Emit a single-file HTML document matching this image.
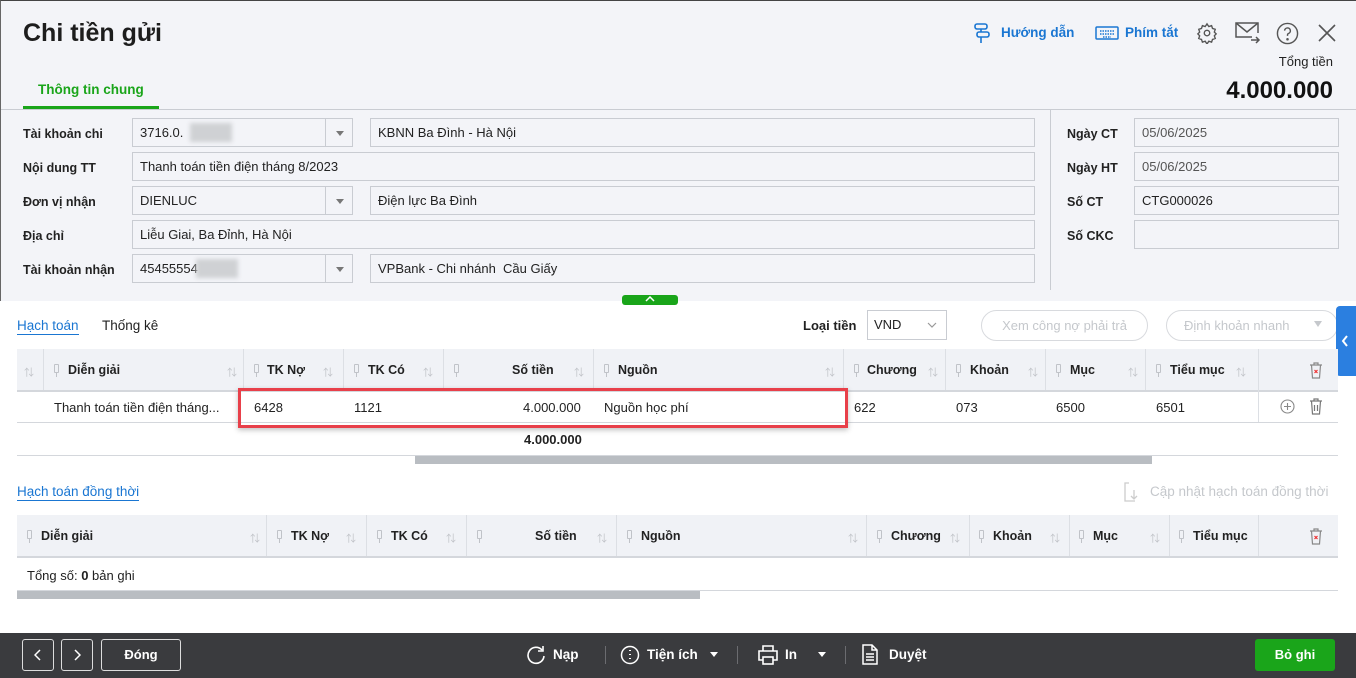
<!DOCTYPE html>
<html><head><meta charset="utf-8"><style>
*{box-sizing:border-box;margin:0;padding:0}
body{width:1356px;height:678px;overflow:hidden;font-family:"Liberation Sans","Noto Sans CJK SC",sans-serif;font-size:13px;color:#222;background:#fff;position:relative}
.a{position:absolute}
.top{left:0;top:0;width:1356px;height:301px;background:#f3f4f8;border-left:1px solid #666;border-top:1px solid #444}
.lbl{position:absolute;font-weight:bold;font-size:12.5px;color:#222}
.in{position:absolute;height:29px;border:1px solid #c9ccd2;background:#f3f4f8;padding:0 7px;line-height:28px;font-size:13px;color:#222}
.dd{position:absolute;width:28px;height:29px;border:1px solid #c9ccd2;border-left:1px solid #c9ccd2;background:#f3f4f8}
.dd:after{content:"";position:absolute;left:10px;top:12px;border-left:4px solid transparent;border-right:4px solid transparent;border-top:5px solid #777}
.blur{position:absolute;background:#cfd1d4;filter:blur(2px)}
.th{position:absolute;background:#f0f2f6;border-bottom:2px solid #d4d7dc}
.th div{position:absolute;top:0;height:100%;border-right:1px solid #dcdfe4;font-weight:bold;font-size:12.5px;line-height:42px}
.hd{position:absolute;font-weight:bold;font-size:12.5px}
.srt{position:absolute;color:#c0c3c8;font-size:10px}
.pin{position:absolute;width:5px;height:9px;border:1px solid #c0c3c8;border-radius:1px}
.pin:after{content:"";position:absolute;left:1px;top:8px;width:1px;height:4px;background:#c0c3c8}
.cell{position:absolute;font-size:13px}
.fb{position:absolute;top:639px;height:32px;border:1px solid #ddd;border-radius:3px;color:#fff;font-weight:bold;text-align:center;line-height:30px}
.ft{position:absolute;color:#fff;font-weight:bold;font-size:13.5px;top:647px}
.sep{position:absolute;top:646px;width:1px;height:18px;background:#6b6c70}
</style></head><body>
<div class="a top"></div>
<div class="a" style="left:23px;top:19px;font-size:25px;font-weight:bold;color:#1d1d1d">Chi tiền gửi</div>
<svg class="a" style="left:972px;top:22px" width="20" height="22" viewBox="0 0 20 22" fill="none" stroke="#1a76d2" stroke-width="1.6"><rect x="3" y="2" width="12" height="5" rx="2"/><rect x="5" y="10" width="12" height="5" rx="2"/><path d="M9 7v3M9 15v6"/></svg>
<div class="a" style="left:1001px;top:25px;color:#1a76d2;font-weight:bold;font-size:13.5px">Hướng dẫn</div>
<svg class="a" style="left:1095px;top:26px" width="24" height="14" viewBox="0 0 24 14" fill="none" stroke="#1a76d2" stroke-width="1.5"><rect x="1" y="1" width="22" height="12" rx="1"/><path d="M5 5h14M5 8h14M8 11h8" stroke-dasharray="1.5 1"/></svg>
<div class="a" style="left:1125px;top:25px;color:#1a76d2;font-weight:bold;font-size:13.5px">Phím tắt</div>
<svg class="a" style="left:1196px;top:22px" width="22" height="22" viewBox="0 0 24 24" fill="none" stroke="#555" stroke-width="1.5"><circle cx="12" cy="12" r="3"/><path d="M12 2l2 3 3-1 1 3 3 1-1 3 2 2-2 2 1 3-3 1-1 3-3-1-2 3-2-3-3 1-1-3-3-1 1-3-2-2 2-2-1-3 3-1 1-3 3 1z"/></svg>
<svg class="a" style="left:1235px;top:22px" width="26" height="22" viewBox="0 0 26 22" fill="none" stroke="#555" stroke-width="1.5"><path d="M17 15H1V1h22v10"/><path d="M1 1l11 9 11-9"/><path d="M16 18h8M21 15l3 3-3 3"/></svg>
<svg class="a" style="left:1276px;top:22px" width="23" height="23" viewBox="0 0 24 24" fill="none" stroke="#555" stroke-width="1.5"><circle cx="12" cy="12" r="10.5"/><path d="M9 9a3 3 0 1 1 4 3c-1 .5-1 1-1 2.5"/><circle cx="12" cy="18" r=".6" fill="#555"/></svg>
<svg class="a" style="left:1318px;top:24px" width="18" height="18" viewBox="0 0 18 18" stroke="#555" stroke-width="1.6"><path d="M1 1l16 16M17 1L1 17"/></svg>
<div class="a" style="right:23px;top:54px;font-size:13px;color:#222">Tổng tiền</div>
<div class="a" style="right:23px;top:77px;font-size:24px;font-weight:bold;color:#111">4.000.000</div>
<div class="a" style="left:38px;top:82px;color:#1aa51a;font-weight:bold;font-size:13.5px">Thông tin chung</div>
<div class="a" style="left:23px;top:106px;width:136px;height:3px;background:#1aa51a"></div>
<div class="a" style="left:1px;top:109px;width:1355px;height:1px;background:#c9ccd2"></div>
<div class="a" style="left:1050px;top:110px;width:1px;height:180px;background:#c9ccd2"></div>
<div class="lbl" style="left:23px;top:127px">Tài khoản chi</div>
<div class="lbl" style="left:23px;top:161px">Nội dung TT</div>
<div class="lbl" style="left:23px;top:195px">Đơn vị nhận</div>
<div class="lbl" style="left:23px;top:229px">Địa chỉ</div>
<div class="lbl" style="left:23px;top:263px">Tài khoản nhận</div>
<div class="in" style="left:132px;top:118px;width:194px">3716.0.</div><div class="blur" style="left:190px;top:123px;width:42px;height:19px"></div><div class="dd" style="left:325px;top:118px"></div>
<div class="in" style="left:370px;top:118px;width:665px">KBNN Ba Đình - Hà Nội</div>
<div class="in" style="left:132px;top:152px;width:903px">Thanh toán tiền điện tháng 8/2023</div>
<div class="in" style="left:132px;top:186px;width:194px">DIENLUC</div><div class="dd" style="left:325px;top:186px"></div>
<div class="in" style="left:370px;top:186px;width:665px">Điện lực Ba Đình</div>
<div class="in" style="left:132px;top:220px;width:903px">Liễu Giai, Ba Đỉnh, Hà Nội</div>
<div class="in" style="left:132px;top:254px;width:194px">45455554</div><div class="blur" style="left:196px;top:259px;width:42px;height:19px"></div><div class="dd" style="left:325px;top:254px"></div>
<div class="in" style="left:370px;top:254px;width:665px">VPBank - Chi nhánh&nbsp; Cầu Giấy</div>
<div class="lbl" style="left:1067px;top:127px">Ngày CT</div>
<div class="lbl" style="left:1067px;top:161px">Ngày HT</div>
<div class="lbl" style="left:1067px;top:195px">Số CT</div>
<div class="lbl" style="left:1067px;top:229px">Số CKC</div>
<div class="in" style="left:1134px;top:118px;width:205px;color:#555">05/06/2025</div>
<div class="in" style="left:1134px;top:152px;width:205px;color:#555">05/06/2025</div>
<div class="in" style="left:1134px;top:186px;width:205px">CTG000026</div>
<div class="in" style="left:1134px;top:220px;width:205px"></div>
<div class="a" style="left:622px;top:295px;width:56px;height:10px;background:#1aa51a;border-radius:3px"></div>
<svg class="a" style="left:645px;top:296px" width="10" height="6" viewBox="0 0 10 6" fill="none" stroke="#fff" stroke-width="1.5"><path d="M1 5l4-4 4 4"/></svg>
<div class="a" style="left:17px;top:318px;color:#1a76d2;font-size:13.5px;border-bottom:1px solid #1a76d2;padding-bottom:1px">Hạch toán</div>
<div class="a" style="left:102px;top:318px;font-size:13.5px">Thống kê</div>
<div class="a" style="left:803px;top:318px;font-weight:bold;font-size:13px">Loại tiền</div>
<div class="a" style="left:867px;top:310px;width:80px;height:30px;border:1px solid #c9ccd2;padding-left:6px;line-height:28px">VND</div>
<svg class="a" style="left:927px;top:322px" width="10" height="6" viewBox="0 0 10 6" fill="none" stroke="#999" stroke-width="1.2"><path d="M1 1l4 4 4-4"/></svg>
<div class="a" style="left:981px;top:310px;width:167px;height:31px;border:1px solid #d8dade;border-radius:16px;color:#c5c8cc;text-align:center;line-height:29px">Xem công nợ phải trả</div>
<div class="a" style="left:1166px;top:310px;width:172px;height:31px;border:1px solid #d8dade;border-radius:16px;color:#c5c8cc;line-height:29px;padding-left:17px">Định khoản nhanh</div>
<div class="a" style="left:1314px;top:321px;border-left:4px solid transparent;border-right:4px solid transparent;border-top:6px solid #c5c8cc"></div>
<div class="a" style="left:1336px;top:306px;width:20px;height:70px;background:#2b7fe0;border-radius:4px 0 0 4px"></div>
<svg class="a" style="left:1341px;top:335px" width="8" height="12" viewBox="0 0 8 12" fill="none" stroke="#fff" stroke-width="2"><path d="M6 1L2 6l4 5"/></svg>
<div class="th" style="left:17px;top:349px;width:1321px;height:43px">
<div style="left:0;width:27px"></div><div style="left:26px;width:201px"></div><div style="left:226px;width:101px"></div><div style="left:326px;width:101px"></div><div style="left:426px;width:151px"></div><div style="left:576px;width:251px"></div><div style="left:826px;width:103px"></div><div style="left:928px;width:101px"></div><div style="left:1028px;width:101px"></div><div style="left:1128px;width:114px"></div>
</div>
<div class="a" style="left:1258px;top:349px;width:1px;height:74px;background:#dcdfe4"></div>
<div class="hd" style="left:68px;top:363px">Diễn giải</div>
<div class="hd" style="left:267px;top:363px">TK Nợ</div>
<div class="hd" style="left:368px;top:363px">TK Có</div>
<div class="hd" style="left:512px;top:363px">Số tiền</div>
<div class="hd" style="left:618px;top:363px">Nguồn</div>
<div class="hd" style="left:867px;top:363px">Chương</div>
<div class="hd" style="left:970px;top:363px">Khoản</div>
<div class="hd" style="left:1070px;top:363px">Mục</div>
<div class="hd" style="left:1170px;top:363px">Tiểu mục</div>
<div class="srt" style="left:24px;top:364px">⇅</div><div class="srt" style="left:227px;top:364px">⇅</div><div class="srt" style="left:323px;top:364px">⇅</div><div class="srt" style="left:423px;top:364px">⇅</div><div class="srt" style="left:574px;top:364px">⇅</div><div class="srt" style="left:825px;top:364px">⇅</div><div class="srt" style="left:928px;top:364px">⇅</div><div class="srt" style="left:1028px;top:364px">⇅</div><div class="srt" style="left:1128px;top:364px">⇅</div><div class="srt" style="left:1236px;top:364px">⇅</div>
<div class="pin" style="left:54px;top:364px"></div><div class="pin" style="left:254px;top:364px"></div><div class="pin" style="left:354px;top:364px"></div><div class="pin" style="left:454px;top:364px"></div><div class="pin" style="left:604px;top:364px"></div><div class="pin" style="left:854px;top:364px"></div><div class="pin" style="left:956px;top:364px"></div><div class="pin" style="left:1056px;top:364px"></div><div class="pin" style="left:1156px;top:364px"></div>
<svg class="a" style="left:1309px;top:362px" width="14" height="17" viewBox="0 0 14 17" fill="none" stroke="#888" stroke-width="1.2"><path d="M1 3h12M5 3V1h4v2M2.5 3l1 13h7l1-13"/><path d="M5.5 8l3 3M8.5 8l-3 3" stroke="#e33"/></svg>
<div class="a" style="left:17px;top:422px;width:1321px;height:1px;background:#d4d7dc"></div>
<div class="cell" style="left:54px;top:400px">Thanh toán tiền điện tháng...</div>
<div class="cell" style="left:254px;top:400px">6428</div>
<div class="cell" style="left:354px;top:400px">1121</div>
<div class="cell" style="left:523px;top:400px">4.000.000</div>
<div class="cell" style="left:604px;top:400px">Nguồn học phí</div>
<div class="cell" style="left:854px;top:400px">622</div>
<div class="cell" style="left:956px;top:400px">073</div>
<div class="cell" style="left:1056px;top:400px">6500</div>
<div class="cell" style="left:1156px;top:400px">6501</div>
<svg class="a" style="left:1280px;top:399px" width="15" height="15" viewBox="0 0 15 15" fill="none" stroke="#888" stroke-width="1.1"><circle cx="7.5" cy="7.5" r="6.5"/><path d="M7.5 4v7M4 7.5h7"/></svg>
<svg class="a" style="left:1309px;top:398px" width="14" height="17" viewBox="0 0 14 17" fill="none" stroke="#777" stroke-width="1.2"><path d="M1 3h12M5 3V1h4v2M2.5 3l1 13h7l1-13M5.5 7v6M8.5 7v6"/></svg>
<div class="a" style="left:238px;top:388px;width:610px;height:40px;border:3px solid #e8404a;box-shadow:0 2px 5px rgba(0,0,0,.25)"></div>
<div class="a" style="left:524px;top:432px;font-weight:bold;font-size:13px">4.000.000</div>
<div class="a" style="left:17px;top:455px;width:1321px;height:1px;background:#d4d7dc"></div>
<div class="a" style="left:415px;top:456px;width:737px;height:8px;background:#b9bdc2"></div>
<div class="a" style="left:17px;top:484px;color:#1a76d2;font-size:13.5px;border-bottom:1px solid #1a76d2;padding-bottom:1px">Hạch toán đồng thời</div>
<svg class="a" style="left:1124px;top:482px" width="16" height="20" viewBox="0 0 16 20" fill="none" stroke="#ccc" stroke-width="1.3"><path d="M5 1H1v18h10M10 8v9M7 14l3 3 3-3"/></svg>
<div class="a" style="left:1150px;top:484px;color:#c5c8cc;font-size:13.5px">Cập nhật hạch toán đồng thời</div>
<div class="th" style="left:17px;top:515px;width:1321px;height:43px">
<div style="left:0;width:250px"></div><div style="left:249px;width:101px"></div><div style="left:349px;width:101px"></div><div style="left:449px;width:151px"></div><div style="left:599px;width:251px"></div><div style="left:849px;width:104px"></div><div style="left:952px;width:101px"></div><div style="left:1052px;width:101px"></div><div style="left:1152px;width:90px"></div>
</div>
<div class="hd" style="left:41px;top:529px">Diễn giải</div>
<div class="hd" style="left:291px;top:529px">TK Nợ</div>
<div class="hd" style="left:391px;top:529px">TK Có</div>
<div class="hd" style="left:535px;top:529px">Số tiền</div>
<div class="hd" style="left:641px;top:529px">Nguồn</div>
<div class="hd" style="left:891px;top:529px">Chương</div>
<div class="hd" style="left:993px;top:529px">Khoản</div>
<div class="hd" style="left:1093px;top:529px">Mục</div>
<div class="hd" style="left:1193px;top:529px">Tiểu mục</div>
<div class="srt" style="left:250px;top:530px">⇅</div><div class="srt" style="left:346px;top:530px">⇅</div><div class="srt" style="left:446px;top:530px">⇅</div><div class="srt" style="left:597px;top:530px">⇅</div><div class="srt" style="left:848px;top:530px">⇅</div><div class="srt" style="left:950px;top:530px">⇅</div><div class="srt" style="left:1050px;top:530px">⇅</div><div class="srt" style="left:1150px;top:530px">⇅</div>
<div class="pin" style="left:27px;top:530px"></div><div class="pin" style="left:277px;top:530px"></div><div class="pin" style="left:377px;top:530px"></div><div class="pin" style="left:477px;top:530px"></div><div class="pin" style="left:627px;top:530px"></div><div class="pin" style="left:877px;top:530px"></div><div class="pin" style="left:979px;top:530px"></div><div class="pin" style="left:1079px;top:530px"></div><div class="pin" style="left:1179px;top:530px"></div>
<svg class="a" style="left:1309px;top:528px" width="14" height="17" viewBox="0 0 14 17" fill="none" stroke="#888" stroke-width="1.2"><path d="M1 3h12M5 3V1h4v2M2.5 3l1 13h7l1-13"/><path d="M5.5 8l3 3M8.5 8l-3 3" stroke="#e33"/></svg>
<div class="a" style="left:27px;top:568px;font-size:13px">Tổng số: <b>0</b> bản ghi</div>
<div class="a" style="left:17px;top:590px;width:1321px;height:1px;background:#d4d7dc"></div>
<div class="a" style="left:17px;top:591px;width:683px;height:8px;background:#b9bdc2"></div>
<div class="a" style="left:0;top:633px;width:1356px;height:45px;background:#3a3b3e"></div>
<div class="fb" style="left:22px;width:32px"></div>
<svg class="a" style="left:34px;top:649px" width="7" height="12" viewBox="0 0 7 12" fill="none" stroke="#fff" stroke-width="1.5"><path d="M6 1L1 6l5 5"/></svg>
<div class="fb" style="left:61px;width:32px"></div>
<svg class="a" style="left:74px;top:649px" width="7" height="12" viewBox="0 0 7 12" fill="none" stroke="#fff" stroke-width="1.5"><path d="M1 1l5 5-5 5"/></svg>
<div class="fb" style="left:101px;width:80px">Đóng</div>
<svg class="a" style="left:526px;top:645px" width="20" height="20" viewBox="0 0 20 20" fill="none" stroke="#fff" stroke-width="1.6"><path d="M16 5a8 8 0 1 0 2 6"/><path d="M17 1v5h-5"/></svg>
<div class="ft" style="left:553px">Nạp</div>
<div class="sep" style="left:605px"></div>
<svg class="a" style="left:620px;top:645px" width="20" height="20" viewBox="0 0 20 20" fill="none" stroke="#fff" stroke-width="1.5"><circle cx="10" cy="10" r="8.5"/><path d="M10 5v1M10 9v1M10 13v1" stroke-width="2"/></svg>
<div class="ft" style="left:647px">Tiện ích</div>
<div class="a" style="left:710px;top:652px;border-left:4px solid transparent;border-right:4px solid transparent;border-top:5px solid #fff"></div>
<div class="sep" style="left:737px"></div>
<svg class="a" style="left:758px;top:645px" width="20" height="20" viewBox="0 0 20 20" fill="none" stroke="#fff" stroke-width="1.6"><path d="M5 6V1h10v5M5 15H1V6h18v9h-4"/><rect x="5" y="12" width="10" height="7"/></svg>
<div class="ft" style="left:785px">In</div>
<div class="a" style="left:818px;top:652px;border-left:4px solid transparent;border-right:4px solid transparent;border-top:5px solid #fff"></div>
<div class="sep" style="left:845px"></div>
<svg class="a" style="left:862px;top:644px" width="16" height="21" viewBox="0 0 16 21" fill="none" stroke="#fff" stroke-width="1.5"><path d="M1 1h9l5 5v14H1z"/><path d="M10 1v5h5M4 10h8M4 13h8M4 16h8"/></svg>
<div class="ft" style="left:889px">Duyệt</div>
<div class="a" style="left:1255px;top:639px;width:80px;height:32px;background:#1aa51a;border-radius:3px;color:#fff;font-weight:bold;text-align:center;line-height:32px">Bỏ ghi</div>
</body></html>
